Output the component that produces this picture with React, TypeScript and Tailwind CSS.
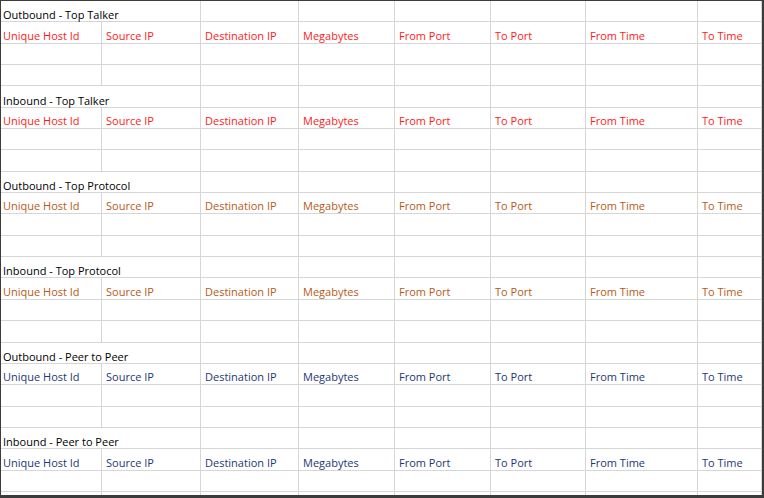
import React from "react";

const widths = [101, 99, 98, 96, 96, 95, 112, 64];
const headers = ["Unique Host Id", "Source IP", "Destination IP", "Megabytes", "From Port", "To Port", "From Time", "To Time"];

const sections = [
  { title: "Outbound - Top Talker", color: "text-[#ff1a1a]" },
  { title: "Inbound - Top Talker", color: "text-[#ff1a1a]" },
  { title: "Outbound - Top Protocol", color: "text-[#b85a16]" },
  { title: "Inbound - Top Protocol", color: "text-[#b85a16]" },
  { title: "Outbound - Peer to Peer", color: "text-[#1c3874]" },
  { title: "Inbound - Peer to Peer", color: "text-[#1c3874]" },
];

function Row({ children }: { children: React.ReactNode }) {
  return <div className="flex h-[21.35px] shrink-0">{children}</div>;
}

function Cell({ w, text, color, first, title }: { w: number; text?: string; color?: string; first?: boolean; title?: boolean }) {
  return (
    <div
      className={`box-border flex items-end shrink-0 border-b border-r border-[#d6d6d6] ${first ? "pl-[2px]" : "pl-[4px]"} ${title ? "pb-0" : "pb-[1px]"} whitespace-nowrap ${color ?? "text-black"}`}
      style={{ width: w }}
    >
      {text}
    </div>
  );
}

export default function App() {
  return (
    <div className="w-[764px] h-[498px] box-border bg-white border-t border-l border-r-2 border-b-[3px] border-[#3c3c3c] overflow-hidden text-[11px] leading-[12px] font-[450]" style={{ fontFamily: '"Open Sans", sans-serif' }}>
      <div className="flex flex-col">
        {sections.map((s) => (
          <React.Fragment key={s.title}>
            <Row>
              <Cell w={widths[0] + widths[1]} text={s.title} first title />
              {widths.slice(2).map((w, i) => (
                <Cell key={i} w={w} />
              ))}
            </Row>
            <Row>
              {widths.map((w, i) => (
                <Cell key={i} w={w} text={headers[i]} color={s.color} first={i === 0} />
              ))}
            </Row>
            <Row>
              {widths.map((w, i) => (
                <Cell key={i} w={w} />
              ))}
            </Row>
            <Row>
              {widths.map((w, i) => (
                <Cell key={i} w={w} />
              ))}
            </Row>
          </React.Fragment>
        ))}
      </div>
    </div>
  );
}
